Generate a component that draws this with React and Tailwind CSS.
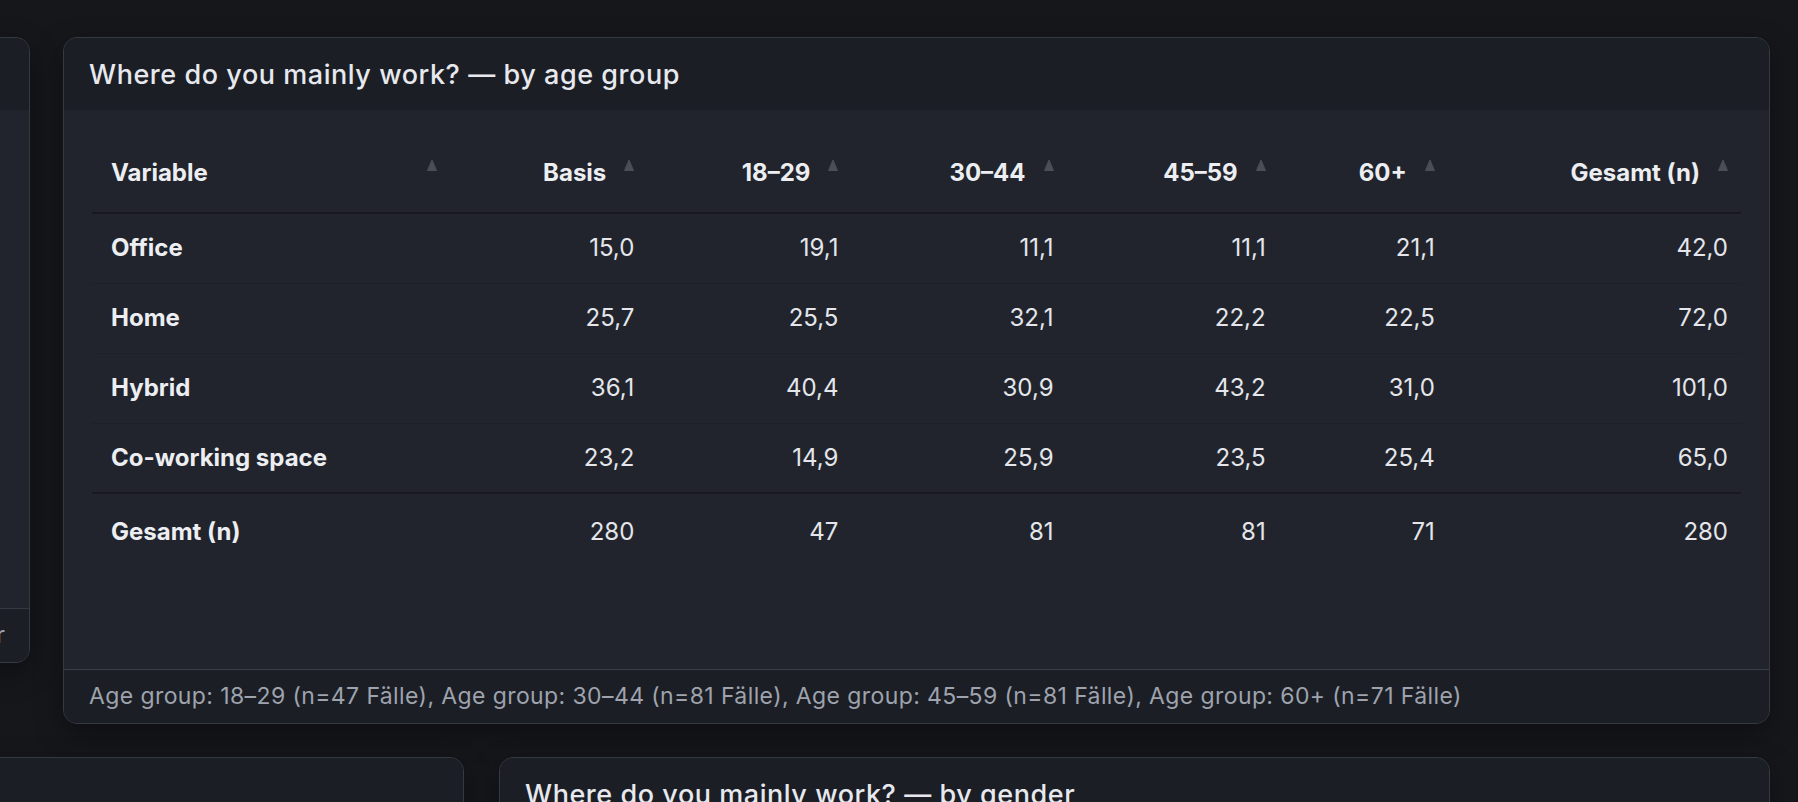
import React from 'react'

const COLS = [
  { key: 'var', label: 'Variable', w: 'w-[358px]' },
  { key: 'basis', label: 'Basis', w: 'w-[197px]' },
  { key: 'a1', label: '18–29', w: 'w-[204px]' },
  { key: 'a2', label: '30–44', w: 'w-[215px]' },
  { key: 'a3', label: '45–59', w: 'w-[212px]' },
  { key: 'a4', label: '60+', w: 'w-[169px]' },
  { key: 'tot', label: 'Gesamt (n)', w: 'w-[293px]' },
]

const ROWS = [
  ['Office', '15,0', '19,1', '11,1', '11,1', '21,1', '42,0'],
  ['Home', '25,7', '25,5', '32,1', '22,2', '22,5', '72,0'],
  ['Hybrid', '36,1', '40,4', '30,9', '43,2', '31,0', '101,0'],
  ['Co-working space', '23,2', '14,9', '25,9', '23,5', '25,4', '65,0'],
]

const TOTAL = ['Gesamt (n)', '280', '47', '81', '81', '71', '280']

function SortArrow() {
  return (
    <svg width="10" height="12" viewBox="0 0 10 12" className="-mt-[17px] shrink-0">
      <path d="M5 1 L9.5 11.5 L0.5 11.5 Z" fill="#4a4e59" stroke="#4a4e59" strokeLinejoin="round" strokeWidth="1" />
    </svg>
  )
}

function Card({ className = '', children }) {
  return (
    <div className={`flex flex-col rounded-[14px] border border-[#353943] bg-[#21242c] overflow-hidden shadow-[0_10px_28px_rgba(0,0,0,0.35)] ${className}`}>
      {children}
    </div>
  )
}

export default function App() {
  return (
    <div className="min-h-screen w-full overflow-hidden bg-[#15171b] pt-[37px] pr-[28px] text-[#e7e9ee]"
      style={{ fontFamily: 'Inter, "Liberation Sans", sans-serif' }}>
      {/* top row */}
      <div className="flex items-start gap-[33px]">
        <Card className="w-[400px] -ml-[370px] h-[626px] shrink-0">
          <div className="h-[72px] bg-[#1b1e25]" />
          <div className="flex-1" />
          <div className="h-[54px] border-t border-[#353943] bg-[#1b1e25] flex items-center justify-end pr-[24px] text-[23px] text-[#9ea3ad]">
            Filter: Alter
          </div>
        </Card>

        <Card className="flex-1 h-[687px]">
          <div className="h-[72px] shrink-0 bg-[#1b1e25] flex items-center pl-[25px] pt-[3px]">
            <h2 className="text-[27px] font-medium tracking-[0.55px] text-[#e7e9ee]">
              Where do you mainly work? — by age group
            </h2>
          </div>

          <div className="flex-1 px-[28px] pt-[24px]">
            <table className="w-full table-fixed border-collapse">
              <colgroup>
                {COLS.map(c => <col key={c.key} className={c.w} />)}
              </colgroup>
              <thead>
                <tr className="h-[79px] border-b-2 border-[#17191f]">
                  {COLS.map((c, i) => (
                    <th key={c.key} className={`${i === 0 ? 'pl-[19px]' : ''} pr-[13px] text-[24px] font-bold text-[#eceef2]`}>
                      <div className={`flex items-center ${i === 0 ? 'justify-between' : 'justify-end gap-[18px]'}`}>
                        <span>{c.label}</span>
                        <SortArrow />
                      </div>
                    </th>
                  ))}
                </tr>
              </thead>
              <tbody>
                {ROWS.map((r, ri) => (
                  <tr key={r[0]} className={`h-[70px] ${ri === ROWS.length - 1 ? 'border-b-2 border-[#181a20]' : 'border-b border-[#1d2027]'}`}>
                    {r.map((v, i) => (
                      <td key={i} className={i === 0
                        ? 'pl-[19px] text-left text-[24px] font-bold text-[#eceef2]'
                        : 'pr-[13px] text-right text-[24px] text-[#e4e6eb]'}>
                        {v}
                      </td>
                    ))}
                  </tr>
                ))}
                <tr className="h-[76px]">
                  {TOTAL.map((v, i) => (
                    <td key={i} className={i === 0
                      ? 'pl-[19px] text-left text-[24px] font-bold text-[#eceef2]'
                      : 'pr-[13px] text-right text-[24px] text-[#e4e6eb]'}>
                      {v}
                    </td>
                  ))}
                </tr>
              </tbody>
            </table>
          </div>

          <div className="h-[54px] shrink-0 border-t border-[#3a3e48] bg-[#1b1e25] flex items-center pl-[25px] text-[23px] tracking-[0.4px] text-[#9ea3ad] whitespace-nowrap">
            Age group: 18–29 (n=47 Fälle), Age group: 30–44 (n=81 Fälle), Age group: 45–59 (n=81 Fälle), Age group: 60+ (n=71 Fälle)
          </div>
        </Card>
      </div>

      {/* bottom row */}
      <div className="mt-[33px] flex items-start gap-[35px]">
        <Card className="w-[500px] -ml-[36px] h-[400px] shrink-0">
          <div className="h-[72px] bg-[#1b1e25]" />
        </Card>
        <Card className="flex-1 h-[400px]">
          <div className="h-[72px] bg-[#1b1e25] flex items-center pl-[25px] pt-[3px]">
            <h2 className="text-[27px] font-medium tracking-[0.55px] text-[#e7e9ee]">
              Where do you mainly work? — by gender
            </h2>
          </div>
        </Card>
      </div>
    </div>
  )
}
